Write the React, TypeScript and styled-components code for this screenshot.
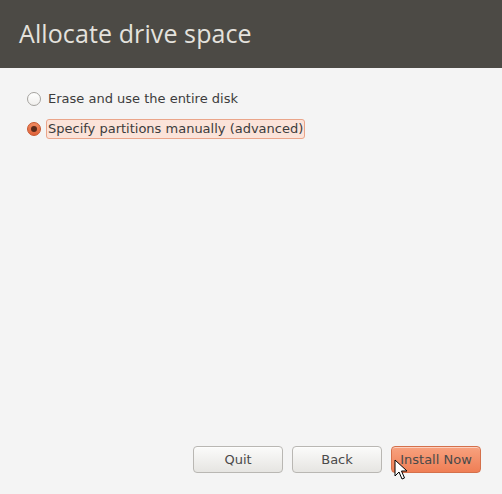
import React, { useState } from 'react';
import styled, { createGlobalStyle } from 'styled-components';

const GlobalStyle = createGlobalStyle`
    html, body, #root {
        margin: 0;
        padding: 0;
        height: 100%;
    }
    body {
        font-family: 'DejaVu Sans', 'Open Sans', sans-serif;
        background: #f4f4f4;
    }
`;

const Window = styled.div`
    position: relative;
    display: flex;
    flex-direction: column;
    height: 494px;
    width: 502px;
    background: #f4f4f4;
    overflow: hidden;
`;

const Header = styled.div`
    height: 68px;
    flex-shrink: 0;
    background: #4c4a45;
    display: flex;
    align-items: center;
    padding-left: 19px;
    box-sizing: border-box;
`;

const Title = styled.h1`
    margin: 0 0 2px;
    font-family: 'Open Sans', sans-serif;
    font-weight: 400;
    font-size: 25px;
    color: #e4e2dd;
    letter-spacing: 0.1px;
`;

const Options = styled.div`
    display: flex;
    flex-direction: column;
    gap: 10px;
    padding: 21px 0 0 27px;
    flex: 1;
`;

const OptionRow = styled.label`
    display: flex;
    align-items: center;
    gap: 5px;
    height: 20px;
    cursor: default;
`;

const RadioDot = styled.span<{ $checked: boolean }>`
    width: 14px;
    height: 14px;
    border-radius: 50%;
    box-sizing: border-box;
    flex-shrink: 0;
    display: flex;
    align-items: center;
    justify-content: center;
    border: 1px solid ${(p) => (p.$checked ? '#c6552d' : '#a5a39f')};
    background: ${(p) =>
        p.$checked
            ? 'linear-gradient(#f08a60, #e0623a)'
            : 'linear-gradient(#ffffff, #f0efed)'};

    &::after {
        content: '';
        display: ${(p) => (p.$checked ? 'block' : 'none')};
        width: 6px;
        height: 6px;
        border-radius: 50%;
        background: #5a2a1a;
    }
`;

const OptionText = styled.span<{ $focused: boolean }>`
    font-size: 13px;
    color: #3c3c3c;
    padding: 1px 1px;
    border-radius: 3px;
    border: 1px solid ${(p) => (p.$focused ? '#eaa58a' : 'transparent')};
    background: ${(p) => (p.$focused ? '#fbe3d9' : 'transparent')};
    line-height: 16px;
`;

const Footer = styled.div`
    display: flex;
    justify-content: flex-end;
    gap: 9px;
    padding: 0 21px 21px 0;
`;

const Button = styled.button<{ $primary?: boolean }>`
    width: 90px;
    height: 27px;
    border-radius: 4px;
    font-family: 'DejaVu Sans', sans-serif;
    font-size: 13px;
    color: #4a4a4a;
    padding: 0;
    border: 1px solid ${(p) => (p.$primary ? '#d4704b' : '#b9b7b3')};
    background: ${(p) =>
        p.$primary
            ? 'linear-gradient(#f8a27f, #ef7e55)'
            : 'linear-gradient(#fbfbfa, #e6e5e2)'};
    box-shadow: inset 0 1px 0 rgba(255, 255, 255, 0.5);
`;

const Cursor = styled.svg`
    position: absolute;
    left: 394px;
    top: 459px;
    pointer-events: none;
`;

const options = ['Erase and use the entire disk', 'Specify partitions manually (advanced)'];

const App = () => {
    const [selected, setSelected] = useState(1);

    return (
        <Window>
            <GlobalStyle />
            <Header>
                <Title>Allocate drive space</Title>
            </Header>
            <Options>
                {options.map((label, i) => (
                    <OptionRow key={i} onClick={() => setSelected(i)}>
                        <RadioDot $checked={selected === i} />
                        <OptionText $focused={selected === i}>{label}</OptionText>
                    </OptionRow>
                ))}
            </Options>
            <Footer>
                <Button>Quit</Button>
                <Button>Back</Button>
                <Button $primary>Install Now</Button>
            </Footer>
            <Cursor width="14" height="22" viewBox="0 0 14 22">
                <path
                    d="M1 1 L1 17 L5 13 L8 20 L10.5 19 L7.5 12 L13 12 Z"
                    fill="#ffffff"
                    stroke="#000000"
                    strokeWidth="1"
                    strokeLinejoin="round"
                />
            </Cursor>
        </Window>
    );
};

export default App;
